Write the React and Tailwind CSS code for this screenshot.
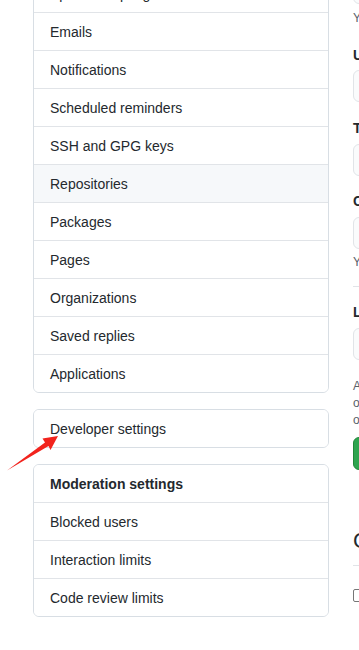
import React from 'react';

const mainItems = [
  'Sponsorship log',
  'Emails',
  'Notifications',
  'Scheduled reminders',
  'SSH and GPG keys',
  'Repositories',
  'Packages',
  'Pages',
  'Organizations',
  'Saved replies',
  'Applications',
];

const moderationItems = ['Blocked users', 'Interaction limits', 'Code review limits'];

const MenuRow = ({ label, first, active, bold }) => (
  <div
    className={`px-4 pt-px flex items-center text-[14px] leading-[21px] text-[#24292e] ${
      first ? 'h-[37px]' : 'h-[38px] border-t border-[#e1e4e8]'
    } ${active ? 'bg-[#f6f8fa]' : 'bg-white'} ${bold ? 'font-semibold' : ''}`}
  >
    {label}
  </div>
);

const Label = ({ children, className = '' }) => (
  <div className={`text-[14px] leading-[21px] font-semibold text-[#24292e] whitespace-nowrap ${className}`}>
    {children}
  </div>
);

const Input = ({ className = '' }) => (
  <div className={`h-[32px] w-[440px] rounded-md border border-[#e1e4e8] bg-[#fafbfc] ${className}`} />
);

const App = () => {
  return (
    <div
      className="relative w-[359px] h-[650px] overflow-hidden bg-white"
      style={{ fontFamily: '"Liberation Sans", Arial, sans-serif' }}
    >
      <div className="flex pl-[33px] gap-[24px]">
        {/* sidebar */}
        <div className="w-[296px] shrink-0 -mt-[26px]">
          <div className="rounded-md border border-[#d8dee4] overflow-hidden">
            {mainItems.map((item, i) => (
              <MenuRow key={item} label={item} first={i === 0} active={item === 'Repositories'} />
            ))}
          </div>

          <div className="mt-4 rounded-md border border-[#d8dee4] overflow-hidden">
            <MenuRow label="Developer settings" first />
          </div>

          <div className="mt-4 rounded-md border border-[#d8dee4] overflow-hidden">
            <MenuRow label="Moderation settings" first bold />
            {moderationItems.map((item) => (
              <MenuRow key={item} label={item} />
            ))}
          </div>
        </div>

        {/* profile form */}
        <div className="w-[460px] shrink-0 -mt-[28px] text-[#24292e]">
          <Input />
          <div className="mt-[5px] text-[12px] leading-[18px] text-[#586069] whitespace-nowrap">
            You can @mention other users and organizations to link to them.
          </div>

          <Label className="mt-[18px]">URL</Label>
          <Input className="mt-[4px]" />

          <Label className="mt-[16px]">Twitter username</Label>
          <Input className="mt-[5px]" />

          <Label className="mt-[15px]">Company</Label>
          <Input className="mt-[5px]" />
          <div className="mt-[4px] text-[12px] leading-[18px] text-[#586069] whitespace-nowrap">
            You can @mention your company's GitHub organization to link it.
          </div>

          <div className="mt-[15px] border-t border-[#e1e4e8]" />

          <Label className="mt-[15px]">Location</Label>
          <Input className="mt-[5px]" />

          <div className="mt-[18px] text-[12px] leading-[17px] text-[#586069] whitespace-nowrap">
            <div>All of the fields on this page are optional and can be deleted at any time, and by filling them</div>
            <div>out, you're giving us consent to share this data wherever your user profile appears. Please see</div>
            <div>our privacy statement to learn more about how we use this information.</div>
          </div>

          <button className="mt-[8px] h-[33px] px-4 rounded-md border border-[#22863a] bg-[#2ea44f] text-white text-[14px] font-semibold">
            Update profile
          </button>

          <div className="mt-[54px] pb-2 border-b border-[#e1e4e8]">
            <h2 className="text-[22px] leading-[33px] font-normal whitespace-nowrap">Contributions</h2>
          </div>

          <label className="mt-[19px] flex items-center gap-2 text-[14px] font-semibold whitespace-nowrap">
            <span className="w-[13px] h-[13px] rounded-[2px] border border-[#767676] bg-white" />
            Include private contributions on my profile
          </label>
        </div>
      </div>

      {/* red annotation arrow */}
      <svg
        className="absolute left-0 top-0 pointer-events-none"
        width="80"
        height="480"
        viewBox="0 0 80 480"
      >
        <polygon
          points="58,436 42.5,438.5 45,442.5 7,470.5 48.5,446 50.5,450"
          fill="#f2231d"
        />
      </svg>
    </div>
  );
};

export default App;
